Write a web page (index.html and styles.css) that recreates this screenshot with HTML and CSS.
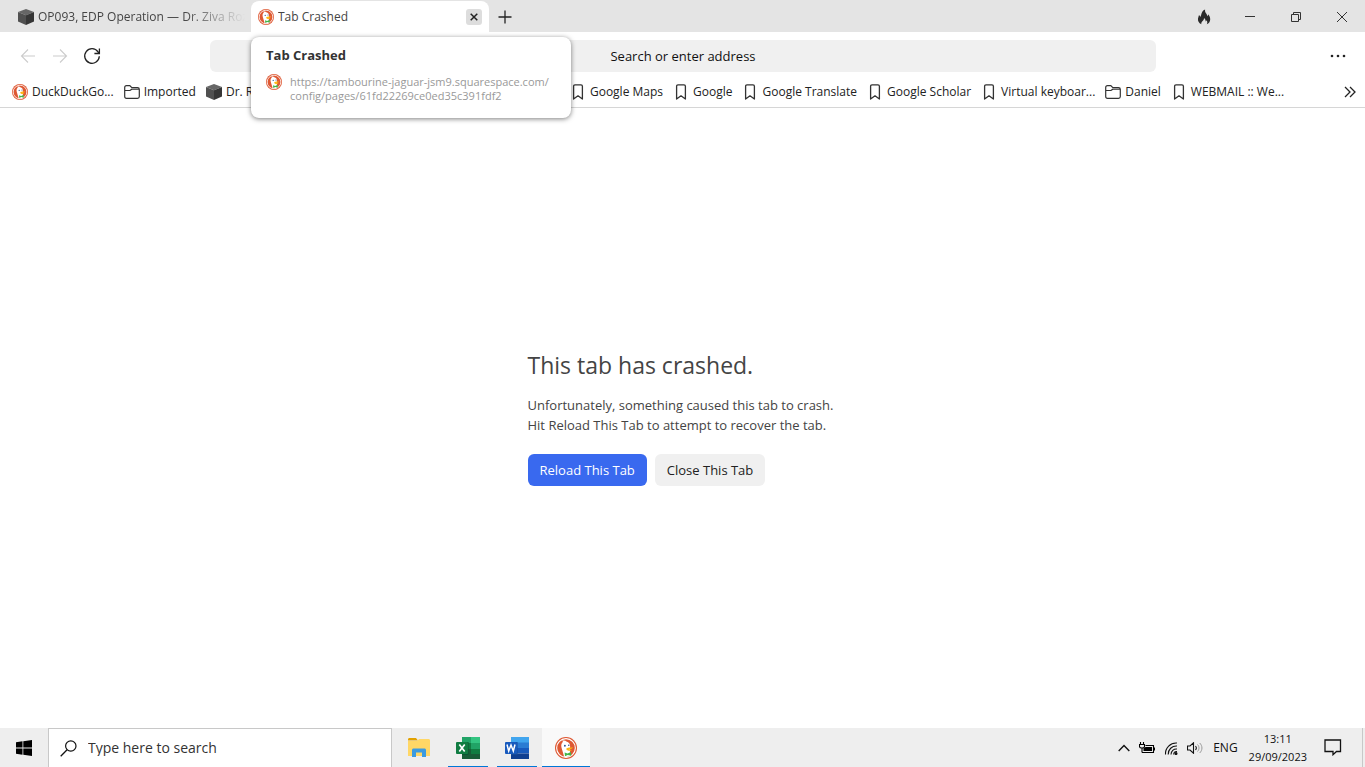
FILE: index.html
```html
<!DOCTYPE html>
<html lang="en">
<head>
    <meta charset="UTF-8">
    <meta name="viewport" content="width=device-width, initial-scale=1.0">
    <title>Tab Crashed</title>
    <link rel="stylesheet" href="styles.css">
</head>
<body>

    <!-- shared icons -->
    <svg class="sprite" aria-hidden="true">
        <symbol id="duck" viewBox="0 0 24 24">
            <circle cx="12" cy="12" r="12" fill="#de5833"/>
            <circle cx="12" cy="12" r="10.200" fill="none" stroke="#fff" stroke-width="1.200"/>
            <path d="M10 21.500 7.200 12C6.300 8.800 7 6.300 9 5.200L7.500 4.200c2-.8 4-.5 5 .6 2.700.6 4 2.600 4 5.200l-.4 5 1.200 5.300c-2.200 1.400-5 1.800-7.300 1.200z" fill="#fff"/>
            <circle cx="10.800" cy="9.500" r="1" fill="#2d4f8e"/>
            <circle cx="15" cy="9" r=".8" fill="#2d4f8e"/>
            <path d="M12.200 12.800c1-1.400 4.800-1.700 7.400-1.300-.6 1.100-2.600 1.600-4.400 1.900 1.200.5 2.600.6 3.400.9-1 1.400-6.200 1.100-6.400-1.500z" fill="#fdb813"/>
            <path d="m10.500 16.800 3.200 1.200 3.600-1.700.4 4.200-3.800-1-3 1.500z" fill="#43b549"/>
        </symbol>
        <symbol id="cube" viewBox="0 0 16 16">
            <path d="M8 0l8 3-8 3.200L0 3z" fill="#666"/>
            <path d="M0 3l8 3.200V16l-8-3.400z" fill="#505050"/>
            <path d="M16 3 8 6.200V16l8-3.400z" fill="#363636"/>
        </symbol>
        <symbol id="folder" viewBox="0 0 16 16">
            <path d="M.7 12.500v-9c0-1 .6-1.800 1.800-1.800h3.300l1.800 1.800h5.900c1.200 0 1.800.7 1.800 1.800v7.200c0 1.100-.7 1.800-1.800 1.800h-11c-1.200 0-1.800-.7-1.800-1.800zM.7 6.500H6l1.800-1.300h7.500" fill="none" stroke="#333" stroke-width="1.200"/>
        </symbol>
        <symbol id="mark" viewBox="0 0 16 16">
            <path d="M3.600 15V2.300c0-.9.500-1.500 1.400-1.500h6c.9 0 1.400.6 1.400 1.500V15L8 11.800z" fill="none" stroke="#333" stroke-width="1.300" stroke-linejoin="round"/>
        </symbol>
    </svg>

    <!-- Tabs -->
    <header class="titlebar">
        <div class="tab">
            <svg class="icon"><use href="#cube"/></svg>
            <span class="tab-title faded">OP093, EDP Operation — Dr. Ziva Roz</span>
        </div>
        <div class="tab active">
            <svg class="icon"><use href="#duck"/></svg>
            <span class="tab-title">Tab Crashed</span>
            <button class="tab-close" aria-label="Close tab">
                <svg width="16" height="16" viewBox="0 0 16 16"><path d="M4.700 4.700l6.600 6.600M11.300 4.700l-6.600 6.600" stroke="#222" stroke-width="1.500"/></svg>
            </button>
            <div class="tooltip">
                <strong>Tab Crashed</strong>
                <div class="tooltip-row">
                    <svg class="icon"><use href="#duck"/></svg>
                    <span>https://tambourine-jaguar-jsm9.squarespace.com/<br>config/pages/61fd22269ce0ed35c391fdf2</span>
                </div>
            </div>
        </div>
        <button class="new-tab" aria-label="New tab">
            <svg width="16" height="16" viewBox="0 0 16 16"><path d="M8 1.500v13M1.500 8h13" stroke="#222" stroke-width="1.300"/></svg>
        </button>
        <div class="window-buttons">
            <button aria-label="Fire">
                <svg width="16" height="16" viewBox="0 0 16 16"><path d="M5.300 15.200C2.800 14 1.600 12 2 9.500c.2-1.400.8-2.300 1-3.600.8.6 1.200 1.300 1.300 2.200C5.700 6 5 4.800 6.300 2.800 7 1.700 8 1 9.100.600c-.5 2 .7 3.500 1.700 5 .3.500.5 1 .5 1.600.7-.6.900-1.200.9-2 1.300 1.500 2.100 3.200 2 5.200-.1 2.300-1.300 4-3.400 4.800.8-1.500.6-2.800-.2-4-.2.700-.5 1.100-1 1.400.1-1.500-.4-2.700-1.600-3.600.1 1.500-.6 2.200-1.400 3.100-1 1-1.500 1.900-1.300 3.100z" fill="#2b2b2b"/></svg>
            </button>
            <button aria-label="Minimize">
                <svg width="10" height="10" viewBox="0 0 10 10"><path d="M0 4.500h10" stroke="#333"/></svg>
            </button>
            <button aria-label="Restore">
                <svg width="10" height="10" viewBox="0 0 10 10"><path d="M.5 2.500h7v7h-7zM2.500 2.500v-2h7v7h-2" fill="none" stroke="#333"/></svg>
            </button>
            <button aria-label="Close">
                <svg width="10" height="10" viewBox="0 0 10 10"><path d="M0 0l10 10M10 0L0 10" stroke="#333"/></svg>
            </button>
        </div>
    </header>

    <!-- Navigation -->
    <nav class="toolbar">
        <div class="nav-buttons">
            <button aria-label="Back" disabled>
                <svg width="16" height="16" viewBox="0 0 16 16"><path d="M15 8H1.500M8 1.500 1.500 8 8 14.500" fill="none" stroke="#ccc" stroke-width="1.100"/></svg>
            </button>
            <button aria-label="Forward" disabled>
                <svg width="16" height="16" viewBox="0 0 16 16"><path d="M1 8h13.500M8 1.500 14.500 8 8 14.500" fill="none" stroke="#ccc" stroke-width="1.100"/></svg>
            </button>
            <button aria-label="Reload">
                <svg width="18" height="18" viewBox="0 0 18 18"><path d="M16.300 9.200A7.300 7.300 0 1 1 15 4.800L16 6M16.400 1.500v5h-5" fill="none" stroke="#222" stroke-width="1.300"/></svg>
            </button>
        </div>
        <input class="address" type="text" placeholder="Search or enter address" aria-label="Address">
        <button class="menu" aria-label="Menu">
            <svg width="16" height="16" viewBox="0 0 16 16" fill="#222"><circle cx="2" cy="8" r="1.300"/><circle cx="8" cy="8" r="1.300"/><circle cx="14" cy="8" r="1.300"/></svg>
        </button>
    </nav>

    <!-- Bookmarks -->
    <div class="bookmarks">
        <a href="#"><svg class="icon"><use href="#duck"/></svg>DuckDuckGo...</a>
        <a href="#"><svg class="icon"><use href="#folder"/></svg>Imported</a>
        <a href="#" class="wide"><svg class="icon"><use href="#cube"/></svg>Dr. R</a>
        <a href="#"><svg class="icon"><use href="#mark"/></svg>Google Maps</a>
        <a href="#"><svg class="icon"><use href="#mark"/></svg>Google</a>
        <a href="#"><svg class="icon"><use href="#mark"/></svg>Google Translate</a>
        <a href="#"><svg class="icon"><use href="#mark"/></svg>Google Scholar</a>
        <a href="#"><svg class="icon"><use href="#mark"/></svg>Virtual keyboar...</a>
        <a href="#"><svg class="icon"><use href="#folder"/></svg>Daniel</a>
        <a href="#"><svg class="icon"><use href="#mark"/></svg>WEBMAIL :: We...</a>
        <button class="more" aria-label="More bookmarks">
            <svg width="12" height="12" viewBox="0 0 12 12"><path d="M1 1l5 5-5 5M6 1l5 5-5 5" fill="none" stroke="#222" stroke-width="1.300"/></svg>
        </button>
    </div>

    <!-- Page -->
    <main class="page">
        <div class="crash">
            <h1>This tab has crashed.</h1>
            <p>Unfortunately, something caused this tab to crash.<br>Hit Reload This Tab to attempt to recover the tab.</p>
            <div class="actions">
                <button class="primary">Reload This Tab</button>
                <button>Close This Tab</button>
            </div>
        </div>
    </main>

    <!-- Taskbar -->
    <footer class="taskbar">
        <button class="start" aria-label="Start">
            <svg width="16" height="16" viewBox="0 0 16 16"><path d="M0 2.200 6.500 1.300v6.200H0zM7.300 1.200 16 0v7.500H7.300zM0 8.400h6.500v6.300L0 13.800zM7.300 8.400H16V16l-8.700-1.200z"/></svg>
        </button>
        <label class="search">
            <svg width="17" height="17" viewBox="0 0 17 17"><circle cx="10.800" cy="6" r="5.200" fill="none" stroke="#111" stroke-width="1.200"/><path d="M7.100 9.700.7 16.200" stroke="#111" stroke-width="1.300"/></svg>
            <input type="text" placeholder="Type here to search" aria-label="Type here to search">
        </label>
        <div class="apps">
            <button aria-label="File Explorer">
                <svg width="22" height="20" viewBox="0 0 22 20"><path d="M0 1.500C0 .7.500 0 1.500 0H8l2 2.500H0z" fill="#e2a100"/><path d="M0 3h9l2-2h9.500c1 0 1.500.600 1.500 1.500V18H0z" fill="#ffd766"/><path d="M4 19v-7c0-1 .7-1.600 1.500-1.600h11c.8 0 1.500.6 1.500 1.600v7h-4v-4.500H8V19z" fill="#3c9be0"/></svg>
            </button>
            <button class="open" aria-label="Excel">
                <svg width="24" height="22" viewBox="0 0 24 22"><path d="M6 0h9v7H6z" fill="#21a366"/><path d="M15 0h9v7h-9z" fill="#33c481"/><path d="M6 6h9v6H6z" fill="#107c41"/><path d="M15 6h9v6h-9z" fill="#21a366"/><path d="M6 12h18v10H6z" fill="#185c37"/><path d="M15 12h9v5h-9z" fill="#107c41"/><path d="M6 5h6.500v13H6z" fill="#0b5531"/><rect y="5" width="12" height="12" rx="1" fill="#107c41"/><path d="m3.300 7.500 5.400 7M8.700 7.500l-5.400 7" stroke="#fff" stroke-width="1.700"/></svg>
            </button>
            <button class="open" aria-label="Word">
                <svg width="24" height="22" viewBox="0 0 24 22"><path d="M6 0h18v6H6z" fill="#41a5ee"/><path d="M6 5.500h18V11H6z" fill="#2b7cd3"/><path d="M6 11h18v5.500H6z" fill="#185abd"/><path d="M6 16.500h18V22H6z" fill="#103f91"/><path d="M6 5h6.500v13H6z" fill="#164a98"/><rect y="5" width="12" height="12" rx="1" fill="#185abd"/><path d="m2 7.500 1.700 6.500L6 8l2.300 6L10 7.500" fill="none" stroke="#fff" stroke-width="1.500"/></svg>
            </button>
            <button class="open current" aria-label="DuckDuckGo">
                <svg width="22" height="22"><use href="#duck"/></svg>
            </button>
        </div>
        <div class="tray">
            <svg width="12" height="8" viewBox="0 0 12 8"><path d="M.7 7 6 1.500 11.300 7" fill="none" stroke="#111" stroke-width="1.400"/></svg>
            <svg width="16" height="12" viewBox="0 0 16 12"><path d="M1.500 0v2M4.500 0v2M.5 2.500h5v2c0 1-1 1.500-2.500 1.500S.500 5.500.500 4.500zM3 6v4.500M3 10.500h11.500v-7H6.500M15.500 5.500v3" fill="none" stroke="#000" stroke-width="1.100"/><path d="M4.500 6.500 6.500 5H13v4H4.500z"/></svg>
            <svg width="14" height="14" viewBox="0 0 14 14" fill="none" stroke="#111" stroke-width="1.100"><path d="M1.500 13.500C1 7 6.500 1.500 13 2M4.200 13.500C4 8.500 8 4.700 13 5M7 13.500C7 10 9.700 7.700 13 8M9.700 13.500c0-2 1.200-3.200 3.300-3"/><circle cx="12" cy="12.500" r="1" fill="#111"/></svg>
            <svg width="17" height="12" viewBox="0 0 17 12" fill="none" stroke="#111"><path d="M.5 4v4H3l3.500 3.200V.8L3 4zM8.500 4c1 1.200 1 2.800 0 4" stroke-width="1.100"/><path d="M10.500 2.500c2 2 2 5 0 7M12.700 1c3 3 3 7 0 10" stroke="#999"/></svg>
            <span class="lang">ENG</span>
            <time class="clock">13:11<br>29/09/2023</time>
            <svg class="notes" width="18" height="17" viewBox="0 0 18 17"><path d="M1 1h15.500v11.500h-4L9 15.700V12.500H1z" fill="none" stroke="#111" stroke-width="1.300"/></svg>
        </div>
    </footer>

</body>
</html>
```
FILE: styles.css
```css
* {
    box-sizing: border-box;
}

body {
    margin: 0;
    min-height: 100vh;
    display: flex;
    flex-direction: column;
    font-family: "Open Sans", "Noto Sans", sans-serif;
    font-size: 12px;
    line-height: 16px;
    color: #222;
    background-color: #fff;
}

button,
input {
    font: inherit;
    color: inherit;
    border: none;
    padding: 0;
    background: none;
}

button {
    display: flex;
    align-items: center;
    justify-content: center;
}

svg {
    flex: none;
    display: block;
}

.sprite {
    position: absolute;
    width: 0;
    height: 0;
}

.icon {
    width: 16px;
    height: 16px;
}

/* Tabs */
.titlebar {
    display: flex;
    height: 32px;
    padding: 1px 0 0 12px;
    background-color: #e4e4e4;
}

.tab {
    position: relative;
    display: flex;
    align-items: center;
    gap: 4px;
    width: 239px;
    padding: 0 6px;
    color: #444;
}

.tab.active {
    width: 238px;
    padding: 0 7px;
    border-radius: 8px 8px 0 0;
    background-color: #fff;
}

.tab-title {
    flex: 1;
    overflow: hidden;
    white-space: nowrap;
}

.faded {
    mask-image: linear-gradient(to right, #000 70%, transparent);
}

.tab-close {
    width: 16px;
    height: 16px;
    border-radius: 3px;
    background-color: #ddd;
}

.tooltip {
    position: absolute;
    z-index: 1;
    top: 36px;
    left: 0;
    width: 320px;
    padding: 10px 14px 15px 15px;
    border-radius: 8px;
    background-color: #fff;
    box-shadow: 0 1px 5px rgba(0, 0, 0, 0.5);
}

.tooltip strong {
    display: block;
    font-size: 13px;
    color: #333;
}

.tooltip-row {
    display: flex;
    gap: 8px;
    margin-top: 12px;
    font-size: 11px;
    line-height: 14px;
    color: #999;
}

.tooltip-row .icon {
    margin-top: -1px;
}

.new-tab {
    width: 32px;
}

.window-buttons {
    display: flex;
    margin-left: auto;
}

.window-buttons button {
    width: 46px;
}

/* Navigation */
.toolbar {
    display: grid;
    grid-template-columns: 210px 1fr 209px;
    align-items: center;
    height: 48px;
}

.nav-buttons {
    display: flex;
    padding-left: 12px;
}

.nav-buttons button {
    width: 32px;
    height: 32px;
}

.address {
    height: 32px;
    border-radius: 6px;
    background-color: #f0f0f0;
    font-size: 13px;
    text-align: center;
}

.address::placeholder {
    color: #111;
    opacity: 1;
}

.menu {
    justify-self: end;
    width: 54px;
    height: 32px;
}

/* Bookmarks */
.bookmarks {
    display: flex;
    align-items: center;
    gap: 10px;
    height: 28px;
    padding: 0 9px 3px 12px;
    border-bottom: 1px solid #d6d6d6;
}

.bookmarks a {
    display: flex;
    align-items: center;
    gap: 4px;
    white-space: nowrap;
    color: inherit;
    text-decoration: none;
}

.bookmarks .wide {
    width: 354px;
}

.more {
    margin-left: auto;
}

/* Crash message */
.page {
    flex: 1;
    display: flex;
    align-items: center;
    justify-content: center;
}

.crash {
    width: 310px;
    white-space: nowrap;
    color: #444;
}

.crash h1 {
    margin: 0;
    font-size: 23px;
    font-weight: 400;
    line-height: 30px;
}

.crash p {
    margin: 15px 0 19px;
    font-size: 13px;
    line-height: 20px;
}

.actions {
    display: flex;
    gap: 8px;
}

.actions button {
    height: 32px;
    padding: 0 12px;
    border-radius: 6px;
    font-size: 13px;
    color: #222;
    background-color: #f0f0f0;
}

.actions .primary {
    color: #fff;
    background-color: #3969ef;
}

/* Taskbar */
.taskbar {
    display: flex;
    height: 39px;
    background-color: #eee;
}

.start {
    width: 48px;
}

.search {
    display: flex;
    align-items: center;
    gap: 11px;
    width: 344px;
    padding: 0 11px;
    border: 1px solid #c8c8c8;
    border-bottom: none;
    background-color: #fff;
}

.search input {
    flex: 1;
    font-size: 14px;
}

.search input::placeholder {
    color: #333;
    opacity: 1;
}

.apps {
    display: flex;
    gap: 1px;
    padding-left: 3px;
}

.apps button {
    position: relative;
    width: 48px;
}

.apps .open::after {
    content: "";
    position: absolute;
    bottom: 0;
    left: 4px;
    right: 4px;
    height: 1px;
    background-color: #0078d7;
}

.apps .current {
    background-color: #f9f9f9;
}

.apps .current::after {
    left: 0;
    right: 0;
}

.tray {
    display: flex;
    align-items: center;
    gap: 9px;
    margin-left: auto;
    margin-right: 2px;
    padding-right: 20px;
    border-right: 1px solid #c8c8c8;
    color: #111;
}

.clock {
    margin: 0 8px 0 2px;
    font-size: 11px;
    line-height: 18px;
    text-align: center;
}
```
